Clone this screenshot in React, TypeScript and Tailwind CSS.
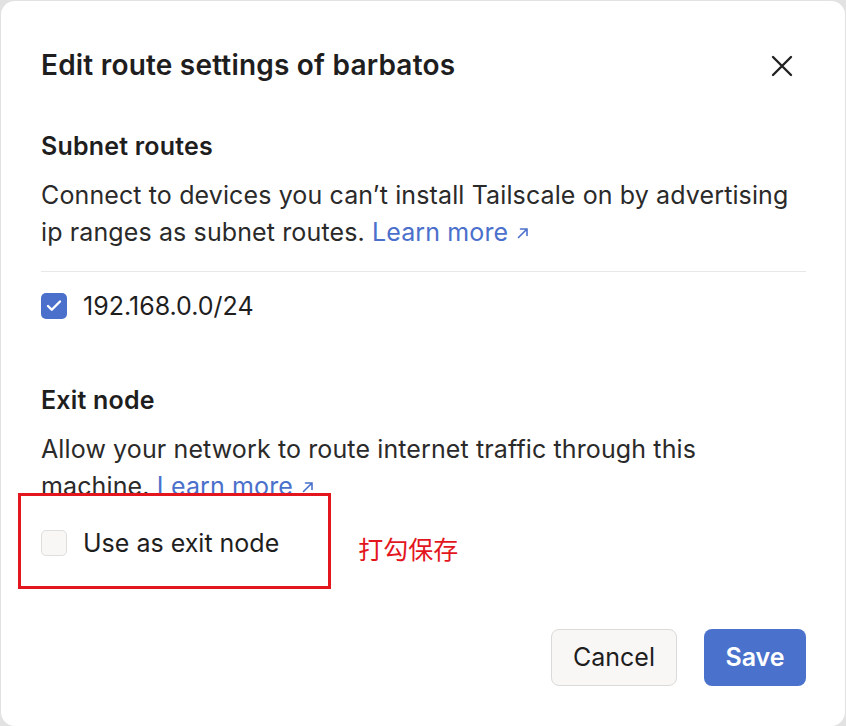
import { Check } from 'lucide-react';

function LearnMore() {
  return (
    <a href="#" className="text-[#4b70cc] whitespace-nowrap">
      Learn more
      <svg viewBox="0 0 16 16" className="inline-block w-[16px] h-[16px] ml-[7px] -mt-[3px] align-middle" fill="none" stroke="currentColor" strokeWidth="1.6" strokeLinecap="round">
        <path d="M3.5 12.5L12 4M5.5 4h6.5v6.5" />
      </svg>
    </a>
  );
}

export default function App() {
  return (
    <div className="w-[846px] h-[726px] bg-[#e2e2e2] pl-[1px] pt-[1px] pr-[1px] font-['Inter','Noto_Sans_CJK_SC',sans-serif] text-[#1f1e1e]">
      <div className="h-[725px] bg-white rounded-[14px] pl-[40px] pr-[39px] pt-[47px] relative">
        {/* header */}
        <div className="flex items-start justify-between">
          <h2 className="text-[28px] leading-[34px] font-semibold tracking-[0.2px]">Edit route settings of barbatos</h2>
          <button className="mt-[7px] mr-[13px] text-[#222]">
            <svg viewBox="0 0 22 22" className="w-[22px] h-[22px]" fill="none" stroke="currentColor" strokeWidth="2.4" strokeLinecap="round">
              <path d="M2 2L20 20M20 2L2 20" />
            </svg>
          </button>
        </div>

        {/* subnet routes */}
        <div className="mt-[49px]">
          <h3 className="text-[25px] leading-[30px] font-semibold tracking-[0.2px]">Subnet routes</h3>
          <p className="mt-[16px] text-[25px] leading-[37px] tracking-[0.12px] text-[#2b2a2a]">
            Connect to devices you can’t install Tailscale on by advertising ip ranges as subnet routes. <LearnMore />
          </p>
          <div className="mt-[20px] border-t border-[#e8e7e6]" />
          <label className="mt-[19px] flex items-center gap-[16px]">
            <span className="w-[26px] h-[26px] rounded-[5px] bg-[#4a70cc] flex items-center justify-center">
              <Check className="w-[18px] h-[18px] text-white" strokeWidth={3.2} />
            </span>
            <span className="text-[25px] leading-[30px]">192.168.0.0/24</span>
          </label>
        </div>

        {/* exit node */}
        <div className="mt-[64px] relative">
          <h3 className="text-[25px] leading-[30px] font-semibold tracking-[0.2px]">Exit node</h3>
          <p className="mt-[16px] text-[25px] leading-[37px] tracking-[0.12px] text-[#2b2a2a]">
            Allow your network to route internet traffic through this machine. <LearnMore />
          </p>
          <div className="mt-[23px] flex items-start">
            <label className="flex items-center gap-[16px]">
              <span className="w-[26px] h-[26px] rounded-[5px] bg-[#f8f7f6] border border-[#e0dedc]" />
              <span className="text-[25px] leading-[30px]">Use as exit node</span>
            </label>
            <span className="ml-[79px] mt-[12px] text-[25px] leading-[20px] text-[#e3161e]">打勾保存</span>
          </div>
          {/* annotation box */}
          <div className="absolute left-[-23px] top-[108px] w-[313px] h-[96px] border-[3px] border-[#e3161e]" />
        </div>

        {/* footer */}
        <div className="mt-[69px] flex justify-end gap-[27px]">
          <button className="w-[126px] h-[57px] rounded-[8px] bg-[#f8f7f6] border border-[#dcdad8] text-[25px]">Cancel</button>
          <button className="w-[102px] h-[57px] rounded-[8px] bg-[#4a72cc] text-white font-semibold text-[25px]">Save</button>
        </div>
      </div>
    </div>
  );
}
